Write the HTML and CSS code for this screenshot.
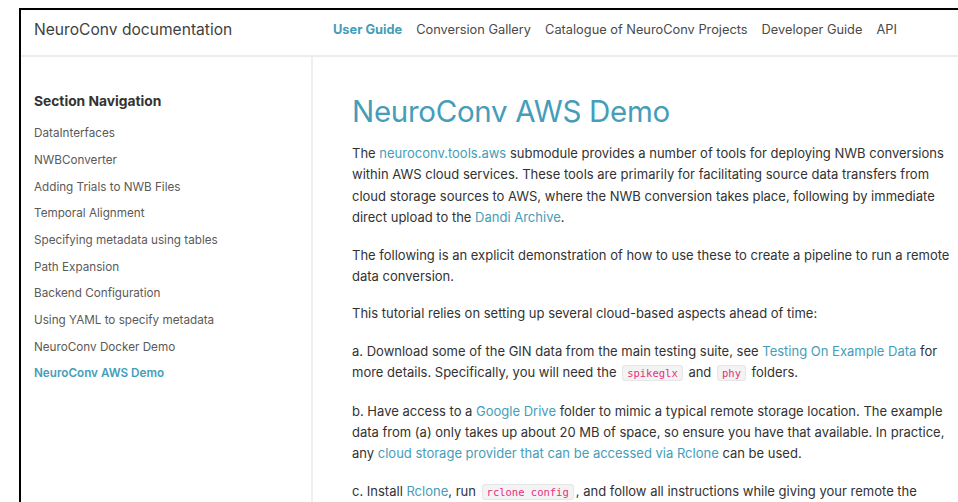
FILE: index.html
```html
<!DOCTYPE html>
<html lang="en">
<head>
<meta charset="utf-8">
<title>NeuroConv AWS Demo — NeuroConv documentation</title>
<link rel="stylesheet" href="styles.css">
</head>
<body>
<div class="frame">
  <header class="topbar">
    <div class="brand">NeuroConv documentation</div>
    <nav class="mainnav">
      <a class="navlink active" href="#">User Guide</a>
      <a class="navlink" href="#">Conversion Gallery</a>
      <a class="navlink" href="#">Catalogue of NeuroConv Projects</a>
      <a class="navlink" href="#">Developer Guide</a>
      <a class="navlink" href="#">API</a>
    </nav>
  </header>
  <div class="layout">
    <aside class="sidebar">
      <div class="side-title">Section Navigation</div>
      <ul class="side-list">
        <li><a href="#">DataInterfaces</a></li>
        <li><a href="#">NWBConverter</a></li>
        <li><a href="#">Adding Trials to NWB Files</a></li>
        <li><a href="#">Temporal Alignment</a></li>
        <li><a href="#">Specifying metadata using tables</a></li>
        <li><a href="#">Path Expansion</a></li>
        <li><a href="#">Backend Configuration</a></li>
        <li><a href="#">Using YAML to specify metadata</a></li>
        <li><a href="#">NeuroConv Docker Demo</a></li>
        <li><a class="current" href="#">NeuroConv AWS Demo</a></li>
      </ul>
    </aside>
    <main class="content">
      <h1 class="title">NeuroConv AWS Demo</h1>
      <p>The <a href="#">neuroconv.tools.aws</a> submodule provides a number of tools for deploying NWB conversions within AWS cloud services. These tools are primarily for facilitating source data transfers from cloud storage sources to AWS, where the NWB conversion takes place, following by immediate direct upload to the <a href="#">Dandi Archive</a>.</p>
      <p>The following is an explicit demonstration of how to use these to create a pipeline to run a remote data conversion.</p>
      <p>This tutorial relies on setting up several cloud-based aspects ahead of time:</p>
      <p>a. Download some of the GIN data from the main testing suite, see <a href="#">Testing On Example Data</a> for more details. Specifically, you will need the <code>spikeglx</code> and <code>phy</code> folders.</p>
      <p>b. Have access to a <a href="#">Google Drive</a> folder to mimic a typical remote storage location. The example data from (a) only takes up about 20 MB of space, so ensure you have that available. In practice, any <a href="#">cloud storage provider that can be accessed via Rclone</a> can be used.</p>
      <p>c. Install <a href="#">Rclone</a>, run <code>rclone config</code>, and follow all instructions while giving your remote the name <code>test_google_drive_remote</code>.</p>
    </main>
  </div>
</div>
</body>
</html>
```

FILE: styles.css
```css
* { box-sizing: border-box; }

html, body {
  margin: 0;
  padding: 0;
  background: #fff;
  height: 100%;
  overflow: hidden;
}

body {
  font-family: Inter, "Liberation Sans", sans-serif;
  color: #323232;
}

a { text-decoration: none; }

.frame {
  margin: 8px 0 0 19px;
  border-left: 2px solid #000;
  border-top: 2px solid #000;
  height: calc(100% - 8px);
  overflow: hidden;
}

/* top navigation bar */
.topbar {
  height: 47px;
  display: flex;
  align-items: center;
  padding-bottom: 6px;
  border-bottom: 2px solid #ececec;
}

.brand {
  width: 292px;
  padding-left: 13px;
  font-size: 15.6px;
  color: #3f3f3f;
}

.mainnav {
  display: flex;
  gap: 14px;
  padding-left: 20px;
}

.navlink {
  font-size: 12.8px;
  color: #4a4a4a;
}

.navlink.active {
  color: #459db9;
  font-weight: 700;
}

/* page body */
.layout {
  display: flex;
  height: 100%;
}

.sidebar {
  width: 292px;
  flex: none;
  border-right: 2px solid #efefef;
  padding: 36px 0 0 13px;
}

.side-title {
  font-size: 13.8px;
  font-weight: 700;
  color: #333;
  margin-bottom: 11px;
}

.side-list {
  list-style: none;
  margin: 0;
  padding: 0;
}

.side-list li {
  height: 26.67px;
  display: flex;
  align-items: center;
}

.side-list a {
  font-size: 11.7px;
  color: #5a5a5a;
}

.side-list a.current {
  color: #459db9;
  font-weight: 600;
}

.content {
  padding: 36px 0 0 39px;
  width: 639px;
  flex: none;
}

.title {
  margin: 0 0 14px;
  font-size: 29.5px;
  font-weight: 400;
  color: #459db9;
  letter-spacing: -0.3px;
}

.content p {
  margin: 0 0 16px;
  font-size: 13px;
  line-height: 21.4px;
  color: #323232;
}

.content a { color: #459db9; }

code {
  font-family: "DejaVu Sans Mono", monospace;
  font-size: 10.5px;
  color: #e6317f;
  background: #f3f3f3;
  border: 1px solid #e6e6e6;
  border-radius: 3px;
  padding: 1px 4px;
  margin: 0 2px;
}
```
